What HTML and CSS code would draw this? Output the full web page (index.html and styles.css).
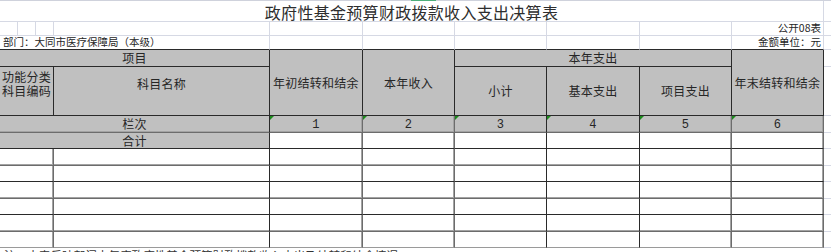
FILE: index.html
```html
<!DOCTYPE html>
<html lang="zh-CN">
<head>
<meta charset="utf-8">
<title>政府性基金预算财政拨款收入支出决算表</title>
<link rel="stylesheet" href="styles.css">
</head>
<body>
<div class="topbar"><span class="sel"></span></div>
<div class="sheet">
  <!-- row 1 -->
  <div class="cell title s10">政府性基金预算财政拨款收入支出决算表</div>
  <div class="cell strip"></div>
  <!-- row 2 -->
  <div class="cell"></div><div class="cell"></div><div class="cell"></div><div class="cell"></div>
  <div class="cell"></div><div class="cell"></div><div class="cell"></div><div class="cell"></div><div class="cell"></div>
  <div class="cell small right">公开08表</div>
  <div class="cell strip"></div>
  <!-- row 3 -->
  <div class="cell small left s4 db">部门：大同市医疗保障局（本级）</div>
  <div class="cell db"></div><div class="cell db"></div><div class="cell db"></div><div class="cell db"></div><div class="cell db"></div>
  <div class="cell small right db">金额单位：元</div>
  <div class="cell strip"></div>
  <!-- row 4 -->
  <div class="cell hd s4 dr db">项目</div>
  <div class="cell hd r2 dr db">年初结转和结余</div>
  <div class="cell hd r2 dr db">本年收入</div>
  <div class="cell hd s3 dr db">本年支出</div>
  <div class="cell hd r2 dr db">年末结转和结余</div>
  <div class="cell strip"></div>
  <!-- row 5 -->
  <div class="cell hd s3 dr db up"><div class="two"><span class="ln">功能分类</span><span class="ln">科目编码</span></div></div>
  <div class="cell hd dr db up">科目名称</div>
  <div class="cell hd dr db">小计</div>
  <div class="cell hd dr db">基本支出</div>
  <div class="cell hd dr db">项目支出</div>
  <div class="cell strip"></div>
  <!-- row 6 -->
  <div class="cell hd s4 dr gb">栏次</div>
  <div class="cell hd num mark gr gb">1</div>
  <div class="cell hd num mark gr gb">2</div>
  <div class="cell hd num mark dr gb">3</div>
  <div class="cell hd num mark dr gb">4</div>
  <div class="cell hd num mark gr gb">5</div>
  <div class="cell hd num mark gr gb">6</div>
  <div class="cell strip"></div>
  <!-- row 7 -->
  <div class="cell hd s4 dr db">合计</div>
  <div class="cell gr db"></div><div class="cell gr db"></div><div class="cell dr db"></div><div class="cell dr db"></div><div class="cell gr db"></div><div class="cell gr db"></div>
  <div class="cell strip"></div>
  <!-- rows 8-13 -->
  <div class="cell s3 gr gb"></div><div class="cell dr gb"></div><div class="cell gr gb"></div><div class="cell gr gb"></div><div class="cell dr gb"></div><div class="cell dr gb"></div><div class="cell gr gb"></div><div class="cell gr gb"></div><div class="cell strip"></div>
  <div class="cell s3 gr db"></div><div class="cell dr db"></div><div class="cell gr db"></div><div class="cell gr db"></div><div class="cell dr db"></div><div class="cell dr db"></div><div class="cell gr db"></div><div class="cell gr db"></div><div class="cell strip"></div>
  <div class="cell s3 gr gb"></div><div class="cell dr gb"></div><div class="cell gr gb"></div><div class="cell gr gb"></div><div class="cell dr gb"></div><div class="cell dr gb"></div><div class="cell gr gb"></div><div class="cell gr gb"></div><div class="cell strip"></div>
  <div class="cell s3 gr db"></div><div class="cell dr db"></div><div class="cell gr db"></div><div class="cell gr db"></div><div class="cell dr db"></div><div class="cell dr db"></div><div class="cell gr db"></div><div class="cell gr db"></div><div class="cell strip"></div>
  <div class="cell s3 gr gb"></div><div class="cell dr gb"></div><div class="cell gr gb"></div><div class="cell gr gb"></div><div class="cell dr gb"></div><div class="cell dr gb"></div><div class="cell gr gb"></div><div class="cell gr gb"></div><div class="cell strip"></div>
  <div class="cell s3 gr lb"></div><div class="cell dr lb"></div><div class="cell gr lb"></div><div class="cell gr lb"></div><div class="cell dr lb"></div><div class="cell dr lb"></div><div class="cell gr lb"></div><div class="cell gr lb"></div><div class="cell strip"></div>
  <!-- note row -->
  <div class="note">注：本表反映部门本年度政府性基金预算财政拨款收入支出及结转和结余情况。</div>
</div>
</body>
</html>
```
FILE: styles.css
```css
html, body {
  margin: 0;
  padding: 0;
  background: #ffffff;
  width: 831px;
  height: 252px;
  overflow: hidden;
}

body {
  font-family: "Noto Sans CJK SC", "Noto Sans", sans-serif;
  color: #262626;
}

.topbar {
  height: 1px;
  background: #cfd2dc;
  display: flex;
}

.sel {
  margin-left: 411px;
  width: 25px;
  height: 1px;
  background: #4cae7a;
}

.sheet {
  display: grid;
  grid-template-columns: 18px 18px 18px 216px 93px 92px 92px 93px 92px 92px 7px;
  grid-template-rows: 21px 14px 14px 17px 49px 17px 16px 17px 16px 17px 16px 17px 16px 20px;
  width: 831px;
}

.cell {
  --rc: #d6d9e4;
  --bc: #d6d9e4;
  --rs: 0;
  --bs: 0;
  box-sizing: border-box;
  border-right: 1px solid var(--rc);
  border-bottom: 1px solid var(--bc);
  box-shadow: inset calc(var(--rs) * -1px) 0 0 #a3a3a3, inset 0 calc(var(--bs) * -1px) 0 #a3a3a3;
  display: flex;
  align-items: center;
  justify-content: center;
  font-size: 12px;
  line-height: 1;
  white-space: nowrap;
  min-width: 0;
  position: relative;
}

.strip {
  border-right: none;
}

.s3 { grid-column: span 3; }
.s4 { grid-column: span 4; }
.s10 { grid-column: span 10; }
.r2 { grid-row: span 2; }

.dr { --rc: #2a2a2a; }
.gr { --rc: #6c6c6c; --rs: 1; }
.db { --bc: #2a2a2a; }
.gb { --bc: #6c6c6c; --bs: 1; }
.lb { --bc: #9a9a9a; }

.title {
  font-size: 16px;
  letter-spacing: 0.3px;
  color: #2e2e2e;
  padding-top: 2px;
}

.small {
  font-size: 10.5px;
}

.left {
  justify-content: flex-start;
  padding-left: 3px;
  overflow: visible;
}

.right {
  justify-content: flex-end;
  padding-right: 2px;
}

.hd {
  background: #c0c0c0;
  letter-spacing: 0.25px;
}

.two {
  display: flex;
  flex-direction: column;
  align-items: center;
  gap: 2px;
}

.ln {
  display: block;
  height: 12px;
  line-height: 12px;
}

.up {
  padding-bottom: 14px;
}

.num {
  font-family: "Liberation Mono", "DejaVu Sans Mono", monospace;
  font-size: 12px;
  padding-top: 1px;
}

.mark::before {
  content: "";
  position: absolute;
  left: 0;
  top: 0;
  width: 0;
  height: 0;
  border-top: 4px solid #1c8a1c;
  border-right: 4px solid transparent;
}

.note {
  grid-column: 1 / -1;
  font-size: 11.6px;
  line-height: 12px;
  padding-top: 1px;
  padding-left: 4px;
  color: #333333;
  white-space: nowrap;
}
```
